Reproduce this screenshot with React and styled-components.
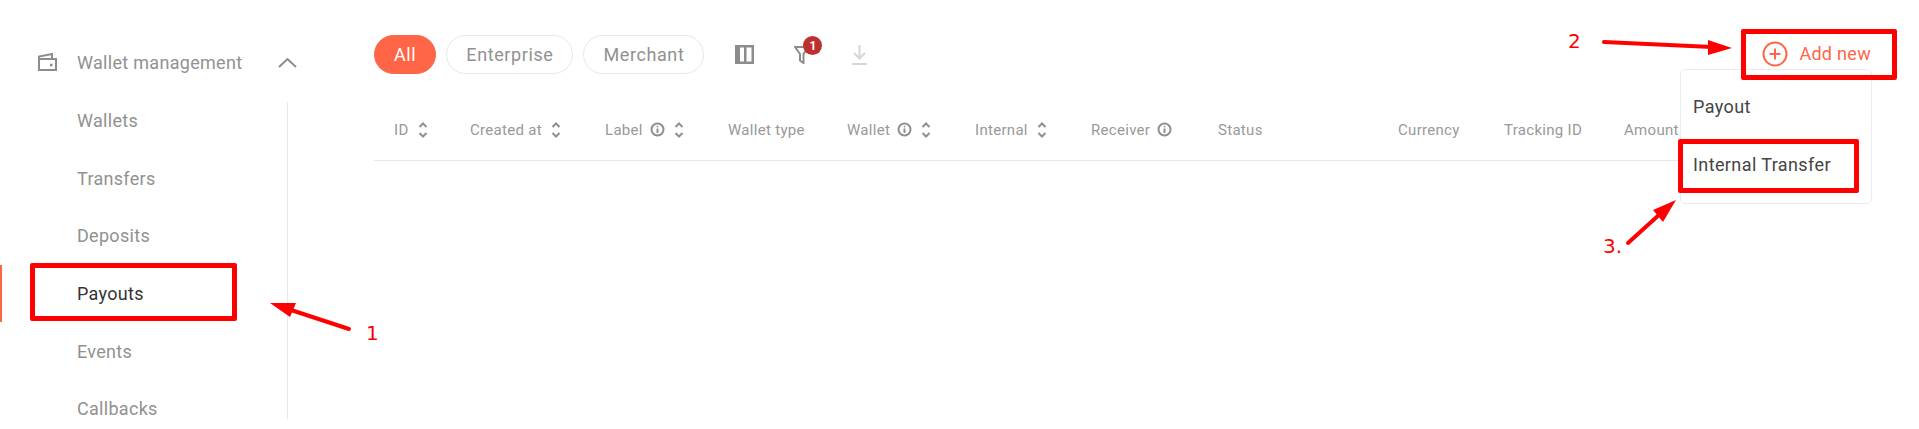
import React from "react";
import styled, { createGlobalStyle } from "styled-components";

const GlobalStyle = createGlobalStyle`
  html, body { margin: 0; padding: 0; background: #fff; }
  body { font-family: Roboto, "Liberation Sans", sans-serif; overflow: hidden; }
  * { box-sizing: border-box; }
`;

const columns = [
  { name: "ID", width: 76, sort: true },
  { name: "Created at", width: 135, sort: true },
  { name: "Label", width: 123, info: true, sort: true },
  { name: "Wallet type", width: 119 },
  { name: "Wallet", width: 128, info: true, sort: true },
  { name: "Internal", width: 116, sort: true },
  { name: "Receiver", width: 127, info: true },
  { name: "Status", width: 180 },
  { name: "Currency", width: 106 },
  { name: "Tracking ID", width: 120 },
  { name: "Amount", width: 57 },
];

const subItems = ["Wallets", "Transfers", "Deposits", "Payouts", "Events", "Callbacks"];

const Sort = () => (
  <SortIcon width="10" height="16" viewBox="0 0 10 16" fill="none" stroke="#8f8f8f" strokeWidth="2">
    <path d="M1.500 5 5 1.500 8.500 5M1.500 11 5 14.500 8.500 11" />
  </SortIcon>
);

const Info = () => (
  <svg width="15" height="15" viewBox="0 0 15 15" fill="none">
    <circle cx="7.500" cy="7.500" r="6" stroke="#8f8f8f" strokeWidth="2" />
    <path d="M7.500 6.500v4.500" stroke="#8f8f8f" strokeWidth="2" />
    <path d="M7.500 3.800v1.600" stroke="#8f8f8f" strokeWidth="1.600" />
  </svg>
);

const Page = () => (
  <Shell>
    <GlobalStyle />
    <Sidebar>
      <GroupHead>
        <svg width="19" height="18" viewBox="0 0 19 18" fill="none" stroke="#8c8c8c" strokeWidth="2">
          <path d="M1 6h17v11H1z" />
          <path d="M1 6V3.500L14 1v5" />
          <path d="M12 12h2.500" strokeWidth="2.500" />
        </svg>
        <GroupLabel>Wallet management</GroupLabel>
        <svg width="19" height="11" viewBox="0 0 19 11" fill="none" stroke="#8c8c8c" strokeWidth="2">
          <path d="M1 10 9.500 2 18 10" />
        </svg>
      </GroupHead>
      <SubList>
        {subItems.map((name) => (
          <SubItem key={name} $active={name === "Payouts"}>{name}</SubItem>
        ))}
      </SubList>
    </Sidebar>
    <Main>
      <Toolbar>
        <Pills>
          <Pill $active>All</Pill>
          <Pill>Enterprise</Pill>
          <Pill>Merchant</Pill>
        </Pills>
        <ToolIcons>
          <svg width="19" height="19" viewBox="0 0 19 19">
            <path fill="#8c8c8c" fillRule="evenodd" d="M0 0h19v19H0zM5 2.500v14h4v-14zm6.500 0v14h5v-14z" />
          </svg>
          <FilterWrap>
            <svg width="15" height="19" viewBox="0 0 15 19" fill="none" stroke="#8c8c8c" strokeWidth="2">
              <path d="M1 2h13L9.500 9v9L6 15.500V9z" />
            </svg>
            <Badge>1</Badge>
          </FilterWrap>
          <DownloadIcon width="15" height="20" viewBox="0 0 15 20" fill="none" stroke="#d6d6d6" strokeWidth="2">
            <path d="M7.500 0v13M2 8l5.500 5.500L13 8M0 19h15" />
          </DownloadIcon>
        </ToolIcons>
        <AddNew>
          <svg width="26" height="26" viewBox="0 0 26 26" fill="none" stroke="#ff6647" strokeWidth="2">
            <circle cx="13" cy="13" r="11.500" />
            <path d="M13 7.500v11M7.500 13h11" />
          </svg>
          Add new
        </AddNew>
      </Toolbar>
      <HeaderRow>
        {columns.map((c) => (
          <HeaderCell key={c.name} $width={c.width}>
            {c.name}
            {c.info && <Info />}
            {c.sort && <Sort />}
          </HeaderCell>
        ))}
      </HeaderRow>
    </Main>
    <Dropdown>
      <DropItem>Payout</DropItem>
      <DropItem>Internal Transfer</DropItem>
    </Dropdown>

    <RedBox $x={30} $y={263} $w={207} $h={58} />
    <RedBox $x={1741} $y={29} $w={156} $h={51} />
    <RedBox $x={1678} $y={139} $w={181} $h={54} />
    <Arrows width="1919" height="429" viewBox="0 0 1919 429">
      <g stroke="#ff0000" strokeWidth="4" strokeLinecap="round" fill="#ff0000">
        <path d="M349 329 288 309" />
        <path d="M1604 42 1712 47" />
        <path d="M1628 243 1660 214" />
      </g>
      <g fill="#ff0000">
        <path d="M270 303h26l-6 14z" />
        <path d="M1732 48 1708 40v15z" />
        <path d="M1676 200 1653 210l10 12z" />
      </g>
    </Arrows>
    <Note $x={366} $y={321}>1</Note>
    <Note $x={1568} $y={29}>2</Note>
    <Note $x={1603} $y={234}>3.</Note>
  </Shell>
);

export default Page;

const Shell = styled.div`
  position: relative;
  display: flex;
  width: 1919px;
  height: 429px;
  overflow: hidden;
`;
const Sidebar = styled.div`
  position: relative;
  width: 288px;
  flex: none;
  padding-top: 33px;
  &::after {
    content: "";
    position: absolute;
    left: 287px;
    top: 102px;
    bottom: 10px;
    width: 1px;
    background: #e8e8e8;
  }
`;
const GroupHead = styled.div`
  display: flex;
  align-items: center;
  width: max-content;
  height: 58px;
  padding-left: 38px;
  svg { flex: none; }
  svg:last-child { margin-left: 36px; }
`;
const GroupLabel = styled.span`
  margin-left: 20px;
  font-size: 18px;
  letter-spacing: 0.3px;
  white-space: nowrap;
  color: #919191;
`;
const SubList = styled.div`
  display: flex;
  flex-direction: column;
  padding-top: 1px;
`;
const SubItem = styled.div`
  position: relative;
  display: flex;
  align-items: center;
  height: 57.600px;
  padding-left: 77px;
  font-size: 18px;
  letter-spacing: 0.3px;
  color: ${(p) => (p.$active ? "#333" : "#919191")};
  ${(p) => p.$active && `
    &::before {
      content: "";
      position: absolute;
      left: 0;
      top: 0;
      bottom: 0;
      width: 2px;
      background: #ff6647;
    }
  `}
`;
const Main = styled.div`
  flex: 1;
  padding: 35px 0 0 86px;
`;
const Toolbar = styled.div`
  display: flex;
  align-items: center;
  height: 39px;
`;
const Pills = styled.div`
  display: flex;
  gap: 10px;
`;
const Pill = styled.div`
  height: 39px;
  padding: 0 19px;
  display: flex;
  align-items: center;
  border-radius: 20px;
  font-size: 18px;
  letter-spacing: 0.6px;
  color: ${(p) => (p.$active ? "#fff" : "#919191")};
  background: ${(p) => (p.$active ? "#ff6647" : "#fff")};
  border: 1px solid ${(p) => (p.$active ? "#ff6647" : "#e8e8e8")};
`;
const ToolIcons = styled.div`
  display: flex;
  align-items: center;
  gap: 39px;
  margin-left: 31px;
`;
const DownloadIcon = styled.svg`
  margin-left: 4px;
`;
const FilterWrap = styled.div`
  position: relative;
  display: flex;
  margin-left: 1px;
`;
const Badge = styled.span`
  position: absolute;
  left: 9px;
  top: -9px;
  width: 19px;
  height: 19px;
  border-radius: 50%;
  background: #bd3030;
  color: #fff;
  font-size: 12px;
  font-weight: 700;
  display: flex;
  align-items: center;
  justify-content: center;
`;
const AddNew = styled.div`
  display: flex;
  align-items: center;
  gap: 11px;
  margin-left: auto;
  margin-right: 48px;
  transform: translateY(-1px);
  font-size: 18px;
  letter-spacing: 0.3px;
  color: #ff6647;
`;
const HeaderRow = styled.div`
  display: flex;
  align-items: center;
  height: 87px;
  padding: 25px 0 0 20px;
  border-bottom: 1px solid #e8e8e8;
  margin-right: 220px;
`;
const HeaderCell = styled.div`
  display: flex;
  align-items: center;
  gap: 7px;
  flex: none;
  width: ${(p) => p.$width}px;
  font-size: 15px;
  letter-spacing: 0.3px;
  color: #999;
  white-space: nowrap;
`;
const SortIcon = styled.svg`
  margin-left: 2px;
`;
const Dropdown = styled.div`
  position: absolute;
  left: 1680px;
  top: 69px;
  width: 192px;
  height: 135px;
  padding-top: 7px;
  background: #fff;
  border: 1px solid #ececec;
  border-radius: 5px;
`;
const DropItem = styled.div`
  display: flex;
  align-items: center;
  height: 58.500px;
  padding-left: 12px;
  font-size: 18px;
  letter-spacing: 0.4px;
  color: #444;
`;
const RedBox = styled.div`
  position: absolute;
  left: ${(p) => p.$x}px;
  top: ${(p) => p.$y}px;
  width: ${(p) => p.$w}px;
  height: ${(p) => p.$h}px;
  border: 5px solid #ff0000;
  border-radius: 2px;
`;
const Arrows = styled.svg`
  position: absolute;
  left: 0;
  top: 0;
  pointer-events: none;
`;
const Note = styled.span`
  position: absolute;
  left: ${(p) => p.$x}px;
  top: ${(p) => p.$y}px;
  font-family: "DejaVu Sans", sans-serif;
  font-size: 20px;
  color: #ff0000;
`;
